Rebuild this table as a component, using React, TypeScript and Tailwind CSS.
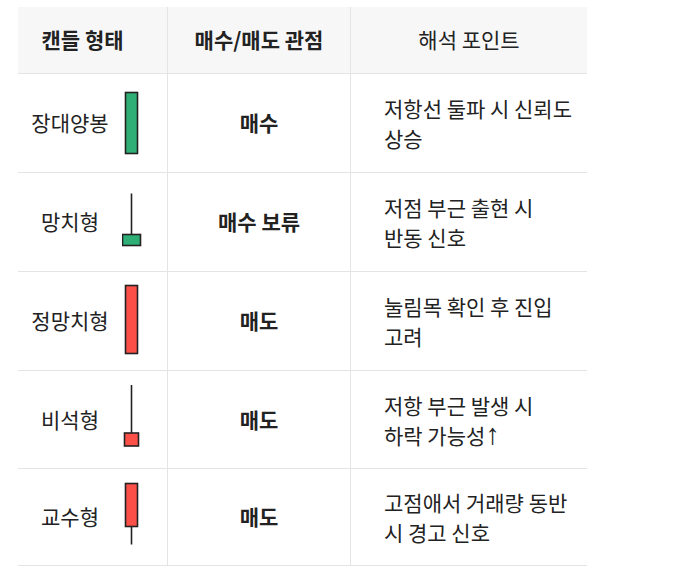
import React from "react";

type Candle = {
  body: { x: number; y: number; w: number; h: number };
  wick?: { y1: number; y2: number };
  color: string;
};

const GREEN = "#2faf76";
const RED = "#fb5048";

const rows: {
  name: string;
  view: string;
  lines: React.ReactNode[];
  h: string;
  candle: Candle;
}[] = [
  {
    name: "장대양봉",
    view: "매수",
    lines: ["저항선 둘파 시 신뢰도", "상승"],
    h: "h-[99px]",
    candle: { body: { x: 3.5, y: 7.5, w: 12, h: 61 }, color: GREEN },
  },
  {
    name: "망치형",
    view: "매수 보류",
    lines: ["저점 부근 출현 시", "반동 신호"],
    h: "h-[99px]",
    candle: {
      body: { x: 0.5, y: 50.5, w: 18, h: 11 },
      wick: { y1: 9.5, y2: 50.5 },
      color: GREEN,
    },
  },
  {
    name: "정망치형",
    view: "매도",
    lines: ["눌림목 확인 후 진입", "고려"],
    h: "h-[99px]",
    candle: { body: { x: 3.5, y: 2.5, w: 12, h: 68 }, color: RED },
  },
  {
    name: "비석형",
    view: "매도",
    lines: [
      "저항 부근 발생 시",
      <>
        하락 가능성
        <span className="font-['Liberation_Sans'] font-bold text-[29px] leading-none">↑</span>
      </>,
    ],
    h: "h-[98px]",
    candle: {
      body: { x: 2.5, y: 51, w: 14, h: 13 },
      wick: { y1: 3, y2: 51 },
      color: RED,
    },
  },
  {
    name: "교수형",
    view: "매도",
    lines: ["고점애서 거래량 동반", "시 경고 신호"],
    h: "h-[97px]",
    candle: {
      body: { x: 3.5, y: 4.5, w: 12, h: 43 },
      wick: { y1: 47.5, y2: 65.5 },
      color: RED,
    },
  },
];

function CandleIcon({ c }: { c: Candle }) {
  return (
    <svg width="20" height="76" viewBox="0 0 20 76" className="shrink-0">
      {c.wick && (
        <line
          x1="9.5"
          x2="9.5"
          y1={c.wick.y1}
          y2={c.wick.y2}
          stroke="#222"
          strokeWidth="1.6"
        />
      )}
      <rect
        x={c.body.x}
        y={c.body.y}
        width={c.body.w}
        height={c.body.h}
        fill={c.color}
        stroke="#222"
        strokeWidth="1.6"
      />
    </svg>
  );
}

export default function App() {
  return (
    <div
      className="w-[680px] h-[577px] bg-white pt-[7px] pl-[18px] text-[#222]"
      style={{ fontFamily: '"Noto Sans CJK KR", "Noto Sans", sans-serif' }}
    >
      <div className="w-[569px] grid grid-cols-[150px_183px_236px] text-[21px]">
        <div className="h-[67px] bg-[#f7f7f7] border-b border-r border-[#e4e4e4] flex items-center justify-center pr-[20px] font-bold">
          캔들 형태
        </div>
        <div className="h-[67px] bg-[#f7f7f7] border-b border-r border-[#e4e4e4] flex items-center justify-center font-bold">
          매수/매도 관점
        </div>
        <div className="h-[67px] bg-[#f7f7f7] border-b border-[#e4e4e4] flex items-center justify-center">
          해석 포인트
        </div>
        {rows.map((r) => (
          <React.Fragment key={r.name}>
            <div
              className={`${r.h} border-b border-r border-[#e4e4e4] flex items-center`}
            >
              <span className="w-[104px] text-center whitespace-nowrap">{r.name}</span>
              <CandleIcon c={r.candle} />
            </div>
            <div
              className={`${r.h} border-b border-r border-[#e4e4e4] flex items-center justify-center font-semibold`}
            >
              {r.view}
            </div>
            <div
              className={`${r.h} border-b border-[#e4e4e4] flex items-center pl-[33px] pr-[4px] leading-[30px]`}
            >
              <div className="flex flex-col whitespace-nowrap">
                {r.lines.map((l, i) => (
                  <span key={i} className="h-[30px]">{l}</span>
                ))}
              </div>
            </div>
          </React.Fragment>
        ))}
      </div>
    </div>
  );
}
